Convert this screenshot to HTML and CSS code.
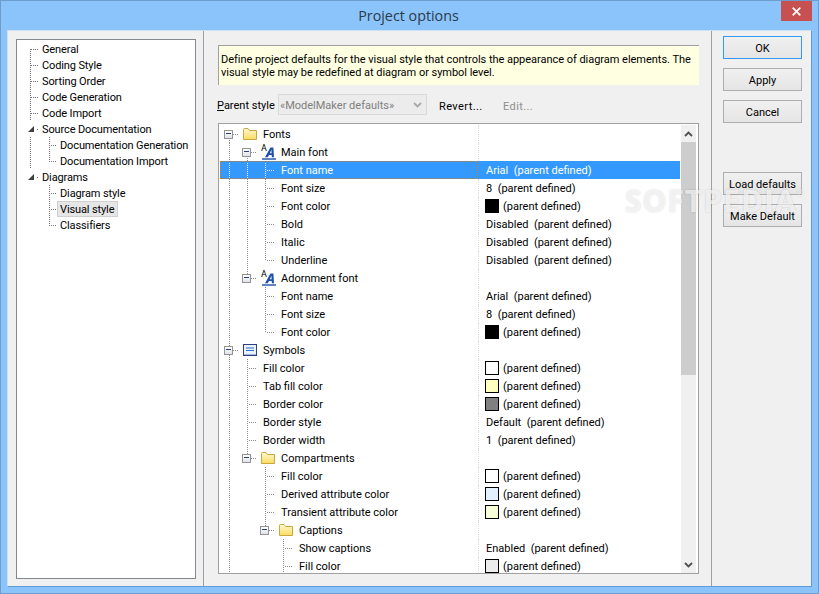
FILE: index.html
```html
<!DOCTYPE html>
<html lang="en">
<head>
<meta charset="utf-8">
<title>Project options</title>
<link rel="stylesheet" href="styles.css">
</head>
<body>
<svg class="defs" width="0" height="0" aria-hidden="true">
  <defs>
    <linearGradient id="fg" x1="0" y1="0" x2="0" y2="1"><stop offset="0" stop-color="#fff8d0"/><stop offset="1" stop-color="#fbdc60"/></linearGradient>
    <symbol id="folder" viewBox="0 0 14 12">
      <path d="M.5 11.5V1.5Q.5.5 1.5.5H5L6.5 2.5H13.5V11.5Z" fill="url(#fg)" stroke="#c9a73f"/>
    </symbol>
    <symbol id="fonticon" viewBox="0 0 16 16">
      <text x="0" y="7" class="ai-small">A</text>
      <path d="M4 13.2 9.4 3.5H12.4L13 13.2H10.8L10.7 11H8L6.8 13.2ZM8.9 9.3H10.6L10.4 5.6Z" fill="#1f4fa8"/>
      <path d="M1 15h14" stroke="#1f4fa8" stroke-width="1.4"/>
    </symbol>
    <symbol id="symicon" viewBox="0 0 14 12">
      <rect x=".5" y=".5" width="13" height="11" fill="#e9f1fb" stroke="#2f3f80"/>
      <path d="M3 4h8M3 6.5h8" stroke="#2a6fd0" stroke-width="1.2"/>
      <path d="M1 10.5h12" stroke="#9db7dc"/>
    </symbol>
  </defs>
</svg>
<div class="window">
  <header class="titlebar">
    <span class="title">Project options</span>
    <button class="close" aria-label="Close"><svg width="9" height="9" viewBox="0 0 9 9"><path d="M.7.7l7.6 7.6M8.3.7.7 8.3" stroke="#fff" stroke-width="1.7"/></svg></button>
  </header>
  <div class="client">
    <nav class="nav">
      <div class="navtree">
        <div class="nrow"><i class="g f"></i><span class="nlabel">General</span></div>
        <div class="nrow"><i class="g t"></i><span class="nlabel">Coding Style</span></div>
        <div class="nrow"><i class="g t"></i><span class="nlabel">Sorting Order</span></div>
        <div class="nrow"><i class="g t"></i><span class="nlabel">Code Generation</span></div>
        <div class="nrow"><i class="g t"></i><span class="nlabel">Code Import</span></div>
        <div class="nrow"><i class="g tri"><b></b></i><span class="nlabel">Source Documentation</span></div>
        <div class="nrow"><i class="g v"></i><i class="g t"></i><span class="nlabel">Documentation Generation</span></div>
        <div class="nrow"><i class="g v"></i><i class="g l"></i><span class="nlabel">Documentation Import</span></div>
        <div class="nrow"><i class="g tri"><b></b></i><span class="nlabel">Diagrams</span></div>
        <div class="nrow"><i class="g"></i><i class="g t"></i><span class="nlabel">Diagram style</span></div>
        <div class="nrow"><i class="g"></i><i class="g t"></i><span class="nlabel selected">Visual style</span></div>
        <div class="nrow"><i class="g"></i><i class="g l"></i><span class="nlabel">Classifiers</span></div>
      </div>
    </nav>
    <main class="main">
      <div class="info">Define project defaults for the visual style that controls the appearance of diagram elements. The visual style may be redefined at diagram or symbol level.</div>
      <div class="parent">
        <span class="parent-label"><u>P</u>arent style</span>
        <div class="combo"><span>«ModelMaker defaults»</span><svg width="9" height="6" viewBox="0 0 9 6"><path d="M1 1l3.5 3.5L8 1" fill="none" stroke="#a8a8a8" stroke-width="1.8"/></svg></div>
        <span class="link revert">Revert...</span>
        <span class="link edit">Edit...</span>
      </div>
      <div class="props">
        <div class="rows">
          <div class="row"><div class="name"><i class="c ef"><b></b></i><span class="ic"><svg class="i14"><use href="#folder"/></svg></span>Fonts</div><div class="val"></div></div>
          <div class="row"><div class="name"><i class="c v"></i><i class="c ef"><b></b></i><span class="ic"><svg class="i16"><use href="#fonticon"/></svg></span>Main font</div><div class="val"></div></div>
          <div class="row sel"><div class="name"><i class="c v"></i><i class="c v"></i><i class="c t"></i><span class="lb">Font name</span></div><div class="val">Arial  (parent defined)</div></div>
          <div class="row"><div class="name"><i class="c v"></i><i class="c v"></i><i class="c t"></i><span class="lb">Font size</span></div><div class="val">8  (parent defined)</div></div>
          <div class="row"><div class="name"><i class="c v"></i><i class="c v"></i><i class="c t"></i><span class="lb">Font color</span></div><div class="val"><s class="sw black"></s>(parent defined)</div></div>
          <div class="row"><div class="name"><i class="c v"></i><i class="c v"></i><i class="c t"></i><span class="lb">Bold</span></div><div class="val">Disabled  (parent defined)</div></div>
          <div class="row"><div class="name"><i class="c v"></i><i class="c v"></i><i class="c t"></i><span class="lb">Italic</span></div><div class="val">Disabled  (parent defined)</div></div>
          <div class="row"><div class="name"><i class="c v"></i><i class="c v"></i><i class="c l"></i><span class="lb">Underline</span></div><div class="val">Disabled  (parent defined)</div></div>
          <div class="row"><div class="name"><i class="c v"></i><i class="c el"><b></b></i><span class="ic"><svg class="i16"><use href="#fonticon"/></svg></span>Adornment font</div><div class="val"></div></div>
          <div class="row"><div class="name"><i class="c v"></i><i class="c"></i><i class="c t"></i><span class="lb">Font name</span></div><div class="val">Arial  (parent defined)</div></div>
          <div class="row"><div class="name"><i class="c v"></i><i class="c"></i><i class="c t"></i><span class="lb">Font size</span></div><div class="val">8  (parent defined)</div></div>
          <div class="row"><div class="name"><i class="c v"></i><i class="c"></i><i class="c l"></i><span class="lb">Font color</span></div><div class="val"><s class="sw black"></s>(parent defined)</div></div>
          <div class="row"><div class="name"><i class="c e"><b></b></i><span class="ic"><svg class="i14"><use href="#symicon"/></svg></span>Symbols</div><div class="val"></div></div>
          <div class="row"><div class="name"><i class="c v"></i><i class="c t"></i><span class="lb">Fill color</span></div><div class="val"><s class="sw white"></s>(parent defined)</div></div>
          <div class="row"><div class="name"><i class="c v"></i><i class="c t"></i><span class="lb">Tab fill color</span></div><div class="val"><s class="sw yellow"></s>(parent defined)</div></div>
          <div class="row"><div class="name"><i class="c v"></i><i class="c t"></i><span class="lb">Border color</span></div><div class="val"><s class="sw gray"></s>(parent defined)</div></div>
          <div class="row"><div class="name"><i class="c v"></i><i class="c t"></i><span class="lb">Border style</span></div><div class="val">Default  (parent defined)</div></div>
          <div class="row"><div class="name"><i class="c v"></i><i class="c t"></i><span class="lb">Border width</span></div><div class="val">1  (parent defined)</div></div>
          <div class="row"><div class="name"><i class="c v"></i><i class="c el"><b></b></i><span class="ic"><svg class="i14"><use href="#folder"/></svg></span>Compartments</div><div class="val"></div></div>
          <div class="row"><div class="name"><i class="c v"></i><i class="c"></i><i class="c t"></i><span class="lb">Fill color</span></div><div class="val"><s class="sw white"></s>(parent defined)</div></div>
          <div class="row"><div class="name"><i class="c v"></i><i class="c"></i><i class="c t"></i><span class="lb">Derived attribute color</span></div><div class="val"><s class="sw blue"></s>(parent defined)</div></div>
          <div class="row"><div class="name"><i class="c v"></i><i class="c"></i><i class="c t"></i><span class="lb">Transient attribute color</span></div><div class="val"><s class="sw pale"></s>(parent defined)</div></div>
          <div class="row"><div class="name"><i class="c v"></i><i class="c"></i><i class="c el"><b></b></i><span class="ic"><svg class="i14"><use href="#folder"/></svg></span>Captions</div><div class="val"></div></div>
          <div class="row"><div class="name"><i class="c v"></i><i class="c"></i><i class="c"></i><i class="c t"></i><span class="lb">Show captions</span></div><div class="val">Enabled  (parent defined)</div></div>
          <div class="row"><div class="name"><i class="c v"></i><i class="c"></i><i class="c"></i><i class="c t"></i><span class="lb">Fill color</span></div><div class="val"><s class="sw light"></s>(parent defined)</div></div>
        </div>
        <div class="scrollbar">
          <div class="sb-btn"><svg width="9" height="6" viewBox="0 0 9 6"><path d="M1 5l3.5-3.5L8 5" fill="none" stroke="#505050" stroke-width="1.8"/></svg></div>
          <div class="sb-thumb"></div>
          <div class="sb-track"></div>
          <div class="sb-btn"><svg width="9" height="6" viewBox="0 0 9 6"><path d="M1 1l3.5 3.5L8 1" fill="none" stroke="#505050" stroke-width="1.8"/></svg></div>
        </div>
      </div>
    </main>
    <aside class="side">
      <button class="btn default">OK</button>
      <button class="btn">Apply</button>
      <button class="btn">Cancel</button>
      <button class="btn load">Load defaults</button>
      <button class="btn">Make Default</button>
    </aside>
  </div>
  <div class="watermark">SOFTPEDIA<sup>®</sup></div>
</div>
</body>
</html>
```
FILE: styles.css
```css
* { box-sizing: border-box; }
html, body { margin: 0; padding: 0; }
body { width: 819px; height: 594px; overflow: hidden; font: 11px/13px Roboto, sans-serif; color: #000; }
.defs { position: absolute; }
.window { position: relative; width: 819px; height: 594px; display: flex; flex-direction: column; padding: 0 6px 6px; background: #8ac4fb; border: 1px solid #6d9ccd; }
.titlebar { height: 29px; flex: none; display: flex; justify-content: center; position: relative; }
.title { font: 14.3px/30px "Open Sans", sans-serif; color: #2b3a4a; padding-right: 2px; }
.close { position: absolute; right: 0; top: 0; width: 31px; height: 20px; padding: 0; border: 0; background: #c75050; display: flex; align-items: center; justify-content: center; }
.client { flex: 1; min-height: 0; display: flex; background: #f0f0f0; border: 1px solid; border-color: #cfe0f2 #5f9bd6 #5f9bd6 #cfe0f2; }
.nav { width: 196px; flex: none; padding: 8px 7px 7px 8px; border-right: 1px solid #a0a0a0; }
.navtree { height: 100%; background: #fff; border: 1px solid #828790; padding: 1px 0 0 5px; }
.nrow { display: flex; height: 16px; align-items: center; }
.g { flex: none; display: block; width: 18px; height: 16px; --x: 8px; }
.g + .g { --x: 9px; }
.g.f, .g.t, .g.l, .g.v { --dots-h: repeating-linear-gradient(to right, #777 0 1px, transparent 1px 2px); --dots-v: repeating-linear-gradient(to bottom, #777 0 1px, transparent 1px 2px); }
.g.v { background: var(--dots-v) var(--x) 0 / 1px 100% no-repeat; }
.g.f { background: var(--dots-h) 9px 8px / 8px 1px no-repeat, var(--dots-v) var(--x) 8px / 1px 8px no-repeat; }
.g.t { background: var(--dots-h) 9px 8px / 8px 1px no-repeat, var(--dots-v) var(--x) 0 / 1px 100% no-repeat; }
.g.l { background: var(--dots-h) 9px 8px / 8px 1px no-repeat, var(--dots-v) var(--x) 0 / 1px 9px no-repeat; }
.g.tri { background: repeating-linear-gradient(to right, #777 0 1px, transparent 1px 2px) 15px 8px / 2px 1px no-repeat; display: flex; align-items: center; }
.g.tri b { display: block; margin-left: 6px; width: 0; height: 0; border-left: 6px solid transparent; border-bottom: 6px solid #404040; }
.nlabel { padding: 0 2px; height: 16px; line-height: 17px; white-space: nowrap; letter-spacing: -.12px; }
.nlabel.selected { background: #e6e6e6; border: 1px solid #cfcfcf; line-height: 15px; padding: 0 3px 0 2px; margin-left: -1px; }
.main { flex: 1; min-width: 0; display: flex; flex-direction: column; padding: 14px 12px 12px 14px; }
.info { height: 40px; padding: 7px 2px 0; background: #ffffe1; border-top: 1px solid #a0a0a0; border-left: 1px solid #a0a0a0; flex: none; letter-spacing: -.03px; }
.parent { height: 21px; margin: 9px 0 8px -1px; flex: none; display: flex; align-items: center; }
.parent-label { width: 61px; flex: none; padding-top: 2px; }
.combo { width: 149px; height: 21px; flex: none; display: flex; align-items: center; justify-content: space-between; padding: 1px 4px 0 1px; background: #ececec; border: 1px solid #d9d9d9; color: #808080; }
.link { flex: none; padding-top: 4px; letter-spacing: .4px; }
.revert { margin-left: 12px; width: 52px; white-space: nowrap; }
.edit { margin-left: 12px; color: #8f8f8f; }
.props { flex: 1; min-height: 0; display: flex; background: #fff; border: 1px solid #a0a0a0; padding: 1px 2px 0 1px; overflow: hidden; }
.rows { width: 460px; flex: none; overflow: hidden; }
.row { display: flex; height: 18px; line-height: 17px; white-space: pre; }
.name { width: 258px; flex: none; display: flex; align-items: center; }
.val { flex: 1; padding-left: 7px; display: flex; align-items: center; border-left: 1px dotted #dcdcdc; }
.c { flex: none; display: block; width: 18px; height: 18px; --d: #8c8c8c; --dh: repeating-linear-gradient(to right, var(--d) 0 1px, transparent 1px 2px); --dv: repeating-linear-gradient(to bottom, var(--d) 0 1px, transparent 1px 2px); }
.c.v { background: var(--dv) 9px 0 / 1px 100% no-repeat; }
.c.t { background: var(--dh) 11px 9px / 7px 1px no-repeat, var(--dv) 9px 0 / 1px 100% no-repeat; }
.c.l { background: var(--dh) 11px 9px / 7px 1px no-repeat, var(--dv) 9px 0 / 1px 10px no-repeat; }
.c.e, .c.ef, .c.el { display: flex; align-items: center; padding-left: 4px; }
.c.e { background: var(--dh) 13px 9px / 5px 1px no-repeat, var(--dv) 9px 0 / 1px 100% no-repeat; }
.c.ef { background: var(--dh) 13px 9px / 5px 1px no-repeat, var(--dv) 9px 9px / 1px 9px no-repeat; }
.c.el { background: var(--dh) 13px 9px / 5px 1px no-repeat, var(--dv) 9px 0 / 1px 9px no-repeat; }
.c b { display: block; width: 9px; height: 9px; border: 1px solid #949494; background: linear-gradient(#fff, #dfe3ea); }
.c b::after { content: ""; display: block; margin: 2.5px 1px 0; height: 1px; background: #2a3f7a; }
.ic { width: 25px; flex: none; display: flex; align-items: center; padding-left: 5px; }
.i14 { width: 14px; height: 12px; display: block; }
.i16 { width: 16px; height: 16px; display: block; }
.ai-small { font: 9px Roboto, sans-serif; fill: #000; }
.lb { margin-left: 7px; }
.sel { background: #3399ff; color: #fff; }
.sel .name { outline: 1px dotted #c8801f; outline-offset: -1px; }
.sel .c { --d: #fff; }
.sel .val { border-left-color: #3399ff; }
.sw { width: 14px; height: 14px; flex: none; margin: 0 4px 0 -1px; border: 1px solid #000; display: block; }
.black { background: #000; }
.white { background: #fff; }
.yellow { background: #ffffc0; }
.gray { background: #808080; }
.blue { background: #e2f0ff; }
.pale { background: #f8ffd8; }
.light { background: #ececec; }
.scrollbar { width: 15px; flex: none; margin-left: 1px; display: flex; flex-direction: column; background: #f0f0f0; }
.sb-btn { height: 17px; flex: none; display: flex; align-items: center; justify-content: center; }
.sb-thumb { height: 233px; flex: none; background: #cdcdcd; }
.sb-track { flex: 1; }
.side { width: 100px; flex: none; padding: 5px 0 0 11px; display: flex; flex-direction: column; gap: 9px; border-left: 1px solid #a0a0a0; }
.btn { width: 79px; height: 23px; padding: 2px 0 0; font: inherit; color: #000; background: linear-gradient(#f0f0f0, #e5e5e5); border: 1px solid #adadad; }
.btn.default { border: 1px solid #3399ff; }
.btn.load { margin-top: 40px; }
.watermark { position: absolute; left: 624px; top: 182px; font: 700 30px/36px "Open Sans", sans-serif; color: rgba(255,255,255,.7); letter-spacing: 1px; text-shadow: 0 0 2px rgba(0,0,0,.18); white-space: nowrap; pointer-events: none; }
.watermark sup { font-size: 9px; font-weight: 400; vertical-align: top; line-height: 20px; letter-spacing: 0; }
```
